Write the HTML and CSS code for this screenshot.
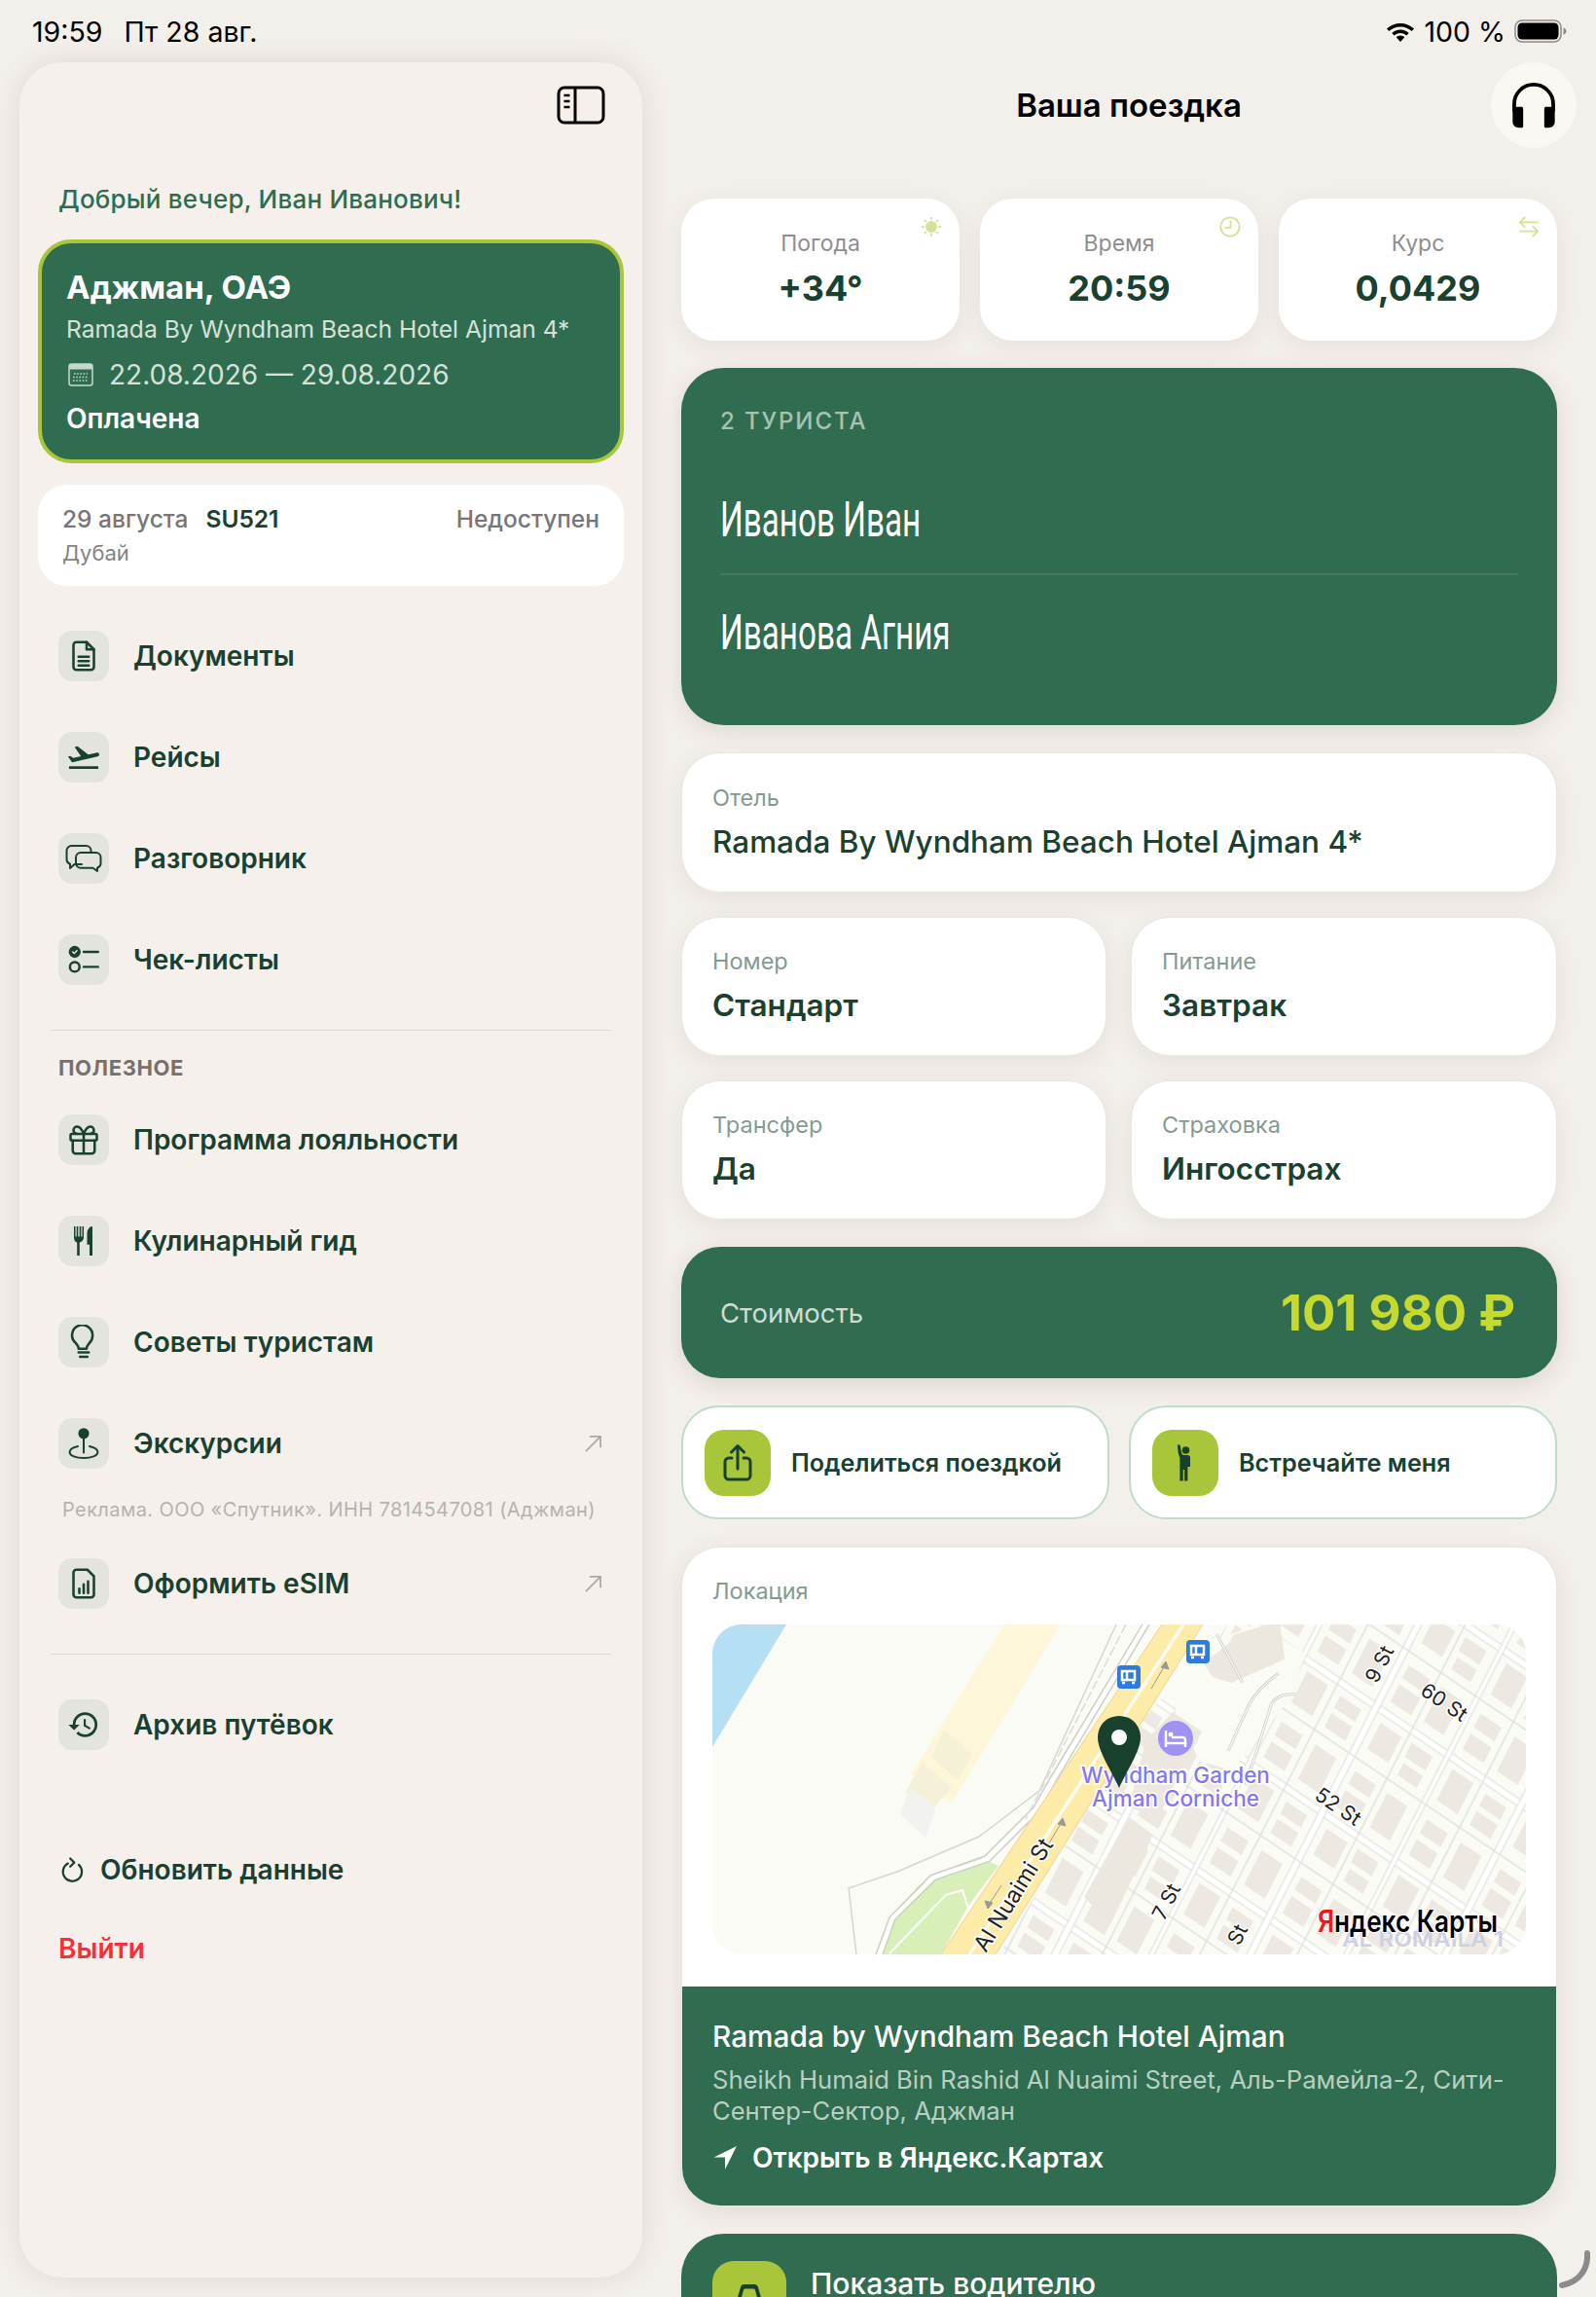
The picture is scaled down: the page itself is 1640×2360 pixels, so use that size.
FILE: index.html
```html
<!DOCTYPE html>
<html lang="ru">
<head>
  <meta charset="utf-8">
  <title>Ваша поездка</title>
  <link rel="stylesheet" href="styles.css">
</head>
<body>
  <div class="status-bar">
    <div class="status-left"><span>19:59</span><span>Пт 28 авг.</span></div>
    <div class="status-right">
      <svg class="wifi" viewBox="0 0 30 22"><path d="M15 3C9.600 3 4.800 5 1 8.600l2.300 2.500C6.300 8.200 10.400 6.500 15 6.500s8.700 1.700 11.700 4.600L29 8.600C25.200 5 20.400 3 15 3z"/><path d="M15 9.500c-3.400 0-6.400 1.300-8.700 3.500l2.400 2.500c1.600-1.600 3.800-2.500 6.300-2.500s4.700.900 6.300 2.500l2.400-2.500c-2.300-2.200-5.300-3.500-8.700-3.500z"/><path d="M15 15.500c-1.700 0-3.200.700-4.300 1.800L15 22l4.300-4.700c-1.100-1.100-2.600-1.800-4.300-1.800z"/></svg>
      <span>100 %</span>
      <svg class="battery" viewBox="0 0 54 24"><rect x="1" y="1" width="47" height="22" rx="7" fill="none" stroke="#8a8a8a" stroke-width="1.500"/><rect x="3.500" y="3.500" width="42" height="17" rx="4.500" fill="#000"/><path d="M50.500 8.500c2 .500 3 2 3 3.500s-1 3-3 3.500z" fill="#8a8a8a"/></svg>
    </div>
  </div>

  <div class="columns">
    <aside class="sidebar">
      <div class="side-top">
        <svg class="side-toggle" viewBox="0 0 50 40" fill="none" stroke="#000" stroke-width="3"><rect x="2" y="2" width="46" height="36" rx="6"/><path d="M19 2v36"/><path d="M7.500 10h6M7.500 16h6M7.500 22h6" stroke-width="2.500"/></svg>
      </div>
      <div class="greeting">Добрый вечер, Иван Иванович!</div>

      <div class="trip-card">
        <div class="trip-title">Аджман, ОАЭ</div>
        <div class="trip-hotel">Ramada By Wyndham Beach Hotel Ajman 4*</div>
        <div class="trip-dates">
          <svg viewBox="0 0 26 24" fill="none"><rect x="1" y="1" width="24" height="22" rx="2.500" stroke="#c5d8cd" stroke-width="1.500"/><path d="M1 6.500h24V3.500a2.500 2.500 0 0 0-2.500-2.500h-19A2.500 2.500 0 0 0 1 3.500z" fill="#c5d8cd"/><path d="M6 11h14M5 14.500h16M5 18h16" stroke="#c5d8cd" stroke-width="1.600" stroke-dasharray="1.600 1.600"/></svg>
          <span>22.08.2026 — 29.08.2026</span>
        </div>
        <div class="trip-status">Оплачена</div>
      </div>

      <div class="flight-card">
        <div class="flight-row">
          <span class="flight-date">29 августа</span>
          <span class="flight-num">SU521</span>
          <span class="flight-state">Недоступен</span>
        </div>
        <div class="flight-city">Дубай</div>
      </div>

      <nav class="nav nav-first">
        <a class="nav-item"><span class="nav-icon"><svg viewBox="0 0 24 24"><path d="M14 2.500H7a2 2 0 0 0-2 2v15a2 2 0 0 0 2 2h10a2 2 0 0 0 2-2V7.500z"/><path d="M14 2.500v5h5M8.500 12.500h7M8.500 15.500h7M8.500 18.500h7"/></svg></span>Документы</a>
        <a class="nav-item"><span class="nav-icon"><svg class="solid plane" viewBox="0 0 24 24" preserveAspectRatio="none"><path d="M2.500 19h19v2h-19v-2zm19.570-9.360c-.210-.800-1.040-1.280-1.840-1.060L14.920 10l-6.900-6.430-1.930.510 4.140 7.170-4.970 1.330-1.970-1.540-1.450.390 1.820 3.160.770 1.330 1.600-.430 5.310-1.420 4.350-1.160L21 11.490c.810-.230 1.280-1.050 1.070-1.850z"/></svg></span>Рейсы</a>
        <a class="nav-item"><span class="nav-icon"><svg class="wide" viewBox="0 0 38 30"><path d="M17 21H9.500L5 25v-4.200C3 20 1.500 18.500 1.500 16V7A5 5 0 0 1 6.500 2h15a5 5 0 0 1 5 5v2"/><path d="M16 9h15.500a5 5 0 0 1 5 5v6a5 5 0 0 1-3.500 4.700V28l-4.500-3.300H16a5 5 0 0 1-5-5V14a5 5 0 0 1 5-5z"/></svg></span>Разговорник</a>
        <a class="nav-item"><span class="nav-icon"><svg class="check" viewBox="0 0 26 26"><circle cx="5.500" cy="6.500" r="4" fill="currentColor"/><path d="M3.800 6.500l1.300 1.300 2.200-2.400" stroke="#e4e4df" stroke-width="1.200"/><circle cx="5.500" cy="19" r="4"/><path d="M13 6.500h12M13 19h12"/></svg></span>Чек-листы</a>
      </nav>

      <div class="side-divider"></div>
      <div class="side-label">ПОЛЕЗНОЕ</div>

      <nav class="nav nav-useful">
        <a class="nav-item"><span class="nav-icon"><svg viewBox="0 0 24 24"><rect x="3" y="8" width="18" height="4.500" rx="1"/><path d="M12 8v13.500M19.500 12.500V19.500a2 2 0 0 1-2 2h-11a2 2 0 0 1-2-2v-7"/><path d="M7.500 8a2.500 2.500 0 0 1 0-5C10 3 12 8 12 8s2-5 4.500-5a2.500 2.500 0 0 1 0 5"/></svg></span>Программа лояльности</a>
        <a class="nav-item"><span class="nav-icon"><svg class="solid fork" viewBox="0 0 24 24" preserveAspectRatio="none"><path d="M10.500 9H9.300V2H7.700v7H6.300V2H4.700v7H3.500V2H2v7.500c0 1.900 1.400 3.400 3.200 3.500v9h2.600v-9C9.600 12.900 12 11.400 12 9.500V2h-1.500zM15.500 7v7.500H18V22h3V2c-3 0-5.500 2.200-5.500 5z"/></svg></span>Кулинарный гид</a>
        <a class="nav-item"><span class="nav-icon"><svg viewBox="0 0 24 24"><path d="M9.500 16.500c0-1.700-.800-2.700-1.800-3.800A7 7 0 1 1 19 8c0 1.800-.800 3.500-2.200 4.700-1 1.100-1.800 2.100-1.800 3.800z" transform="translate(-1 0)"/><path d="M8.500 19h7M9.500 22h5"/></svg></span>Советы туристам</a>
        <a class="nav-item"><span class="nav-icon"><svg viewBox="0 0 30 30"><circle cx="15" cy="6.500" r="3.800" fill="currentColor"/><path d="M15 10v13"/><path d="M10 17.500c-4.500 1-7 2.700-7 5 0 3 5.400 5 12 5s12-2 12-5c0-2.300-2.500-4-7-5"/></svg></span>Экскурсии<svg class="ext-arrow" viewBox="0 0 20 20"><path d="M2 18L18 2M6 2h12v12"/></svg></a>
      </nav>
      <div class="ad-note">Реклама. ООО «Спутник». ИНН 7814547081 (Аджман)</div>
      <nav class="nav nav-esim">
        <a class="nav-item"><span class="nav-icon"><svg viewBox="0 0 24 24"><path d="M14.500 2.500H7a2 2 0 0 0-2 2v15a2 2 0 0 0 2 2h10a2 2 0 0 0 2-2V7z"/><path d="M9 18.500v-3M12 18.500v-6M15 18.500v-8"/></svg></span>Оформить eSIM<svg class="ext-arrow" viewBox="0 0 20 20"><path d="M2 18L18 2M6 2h12v12"/></svg></a>
      </nav>

      <div class="side-divider"></div>
      <nav class="nav nav-archive">
        <a class="nav-item"><span class="nav-icon"><svg class="solid big" viewBox="0 0 24 24"><path d="M13 3a9 9 0 0 0-9 9H1l3.890 3.890.070.140L9 12H6c0-3.870 3.130-7 7-7s7 3.130 7 7-3.130 7-7 7c-1.930 0-3.680-.790-4.940-2.060l-1.420 1.420A8.954 8.954 0 0 0 13 21a9 9 0 0 0 0-18zm-1 5v5l4.280 2.540.720-1.210-3.500-2.080V8H12z"/></svg></span>Архив путёвок</a>
      </nav>

      <a class="refresh"><svg viewBox="0 0 26 28"><path d="M8.500 7a10.500 10.500 0 1 0 12 1.500"/><path d="M11 1.500L15.500 6 11 10.500"/></svg>Обновить данные</a>
      <a class="logout">Выйти</a>
    </aside>

    <main class="main">
      <header class="main-head">
        <h1>Ваша поездка</h1>
        <button class="support">
          <svg viewBox="0 0 48 48"><path d="M5.500 30V23a18.500 18.500 0 0 1 37 0v7" fill="none" stroke="#000" stroke-width="3.500"/><path d="M4 30c0-2.500 2-4.500 5-4.500h3.500a1.500 1.500 0 0 1 1.500 1.500v17a1.500 1.500 0 0 1-1.500 1.500H10c-3.500 0-6-2.500-6-5.500zM44 30c0-2.500-2-4.500-5-4.500h-3.500A1.500 1.500 0 0 0 34 27v17a1.500 1.500 0 0 0 1.500 1.500H38c3.500 0 6-2.500 6-5.500z"/></svg>
        </button>
      </header>

      <section class="stats">
        <div class="stat">
          <svg class="stat-icon" viewBox="0 0 24 24"><circle cx="12" cy="12" r="5.500" fill="#d3e294"/><path d="M12 1v3M12 20v3M1 12h3M20 12h3M4.200 4.200l2.100 2.100M17.700 17.700l2.100 2.100M4.200 19.800l2.100-2.100M17.700 6.300l2.100-2.100"/></svg>
          <div class="stat-label">Погода</div>
          <div class="stat-value">+34°</div>
        </div>
        <div class="stat">
          <svg class="stat-icon" viewBox="0 0 24 24"><circle cx="12" cy="12" r="10.500"/><path d="M12.500 5v8H6"/></svg>
          <div class="stat-label">Время</div>
          <div class="stat-value">20:59</div>
        </div>
        <div class="stat">
          <svg class="stat-icon" viewBox="0 0 24 24"><path d="M23 7H2M8 1L2 7l6 6M1 17h21M16 11l6 6-6 6"/></svg>
          <div class="stat-label">Курс</div>
          <div class="stat-value">0,0429</div>
        </div>
      </section>

      <section class="tourists">
        <div class="tourists-count">2 ТУРИСТА</div>
        <div class="tourist tourist-first"><span>Иванов Иван</span></div>
        <div class="tourist"><span>Иванова Агния</span></div>
      </section>

      <section class="details">
        <div class="detail detail-wide">
          <div class="detail-label">Отель</div>
          <div class="detail-value">Ramada By Wyndham Beach Hotel Ajman 4*</div>
        </div>
        <div class="detail-row">
          <div class="detail"><div class="detail-label">Номер</div><div class="detail-value">Стандарт</div></div>
          <div class="detail"><div class="detail-label">Питание</div><div class="detail-value">Завтрак</div></div>
        </div>
        <div class="detail-row">
          <div class="detail"><div class="detail-label">Трансфер</div><div class="detail-value">Да</div></div>
          <div class="detail"><div class="detail-label">Страховка</div><div class="detail-value">Ингосстрах</div></div>
        </div>
      </section>

      <section class="cost">
        <span class="cost-label">Стоимость</span>
        <span class="cost-value">101 980 ₽</span>
      </section>

      <section class="actions">
        <button class="action">
          <span class="action-icon"><svg viewBox="0 0 32 40"><path d="M10 15H7a4 4 0 0 0-4 4v14a4 4 0 0 0 4 4h18a4 4 0 0 0 4-4V19a4 4 0 0 0-4-4h-3"/><path d="M16 26V3M9.500 9L16 2.500 22.500 9"/></svg></span>
          Поделиться поездкой
        </button>
        <button class="action">
          <span class="action-icon"><svg class="solid" viewBox="0 0 32 40"><circle cx="16.500" cy="7" r="3.800"/><path d="M8 1.500h2.600l1.600 8.500c.300 1.300 1.200 2 2.500 2h3.600c1.600 0 2.700 1.100 2.700 2.700V24h-2.600v14.500h-3.300V27h-1.400v11.500h-3.300V14.800L9.500 12.500C8.700 10 8 5 8 1.500z"/></svg></span>
          Встречайте меня
        </button>
      </section>

      <section class="location">
        <div class="location-top">
          <div class="detail-label">Локация</div>
          <div class="map">
            <svg viewBox="0 0 836 339" width="836" height="339">
              <defs>
                <pattern id="blocks" width="180" height="122" patternUnits="userSpaceOnUse" patternTransform="matrix(.829 .559 -.454 .891 476 86)">
                  <rect width="180" height="122" fill="#fbfbf6"/>
                  <g fill="#ede9e2">
                    <rect x="16" y="16" width="26" height="30"/><rect x="54" y="15" width="26" height="16"/><rect x="56" y="37" width="24" height="14"/>
                    <rect x="15" y="72" width="26" height="15"/><rect x="15" y="94" width="26" height="20"/><rect x="55" y="72" width="25" height="40"/>
                    <rect x="104" y="14" width="26" height="36"/><rect x="146" y="16" width="26" height="14"/><rect x="146" y="36" width="26" height="16"/>
                    <rect x="104" y="72" width="26" height="16"/><rect x="104" y="95" width="26" height="18"/><rect x="146" y="72" width="26" height="40"/>
                  </g>
                  <g fill="#fff" stroke="#dcdcd7" stroke-width="1">
                    <rect x="-2" y="1" width="184" height="7"/><rect x="1" y="-2" width="7" height="126"/><rect x="91" y="-2" width="5" height="126"/>
                  </g>
                  <g stroke="#e2e2dd" stroke-width="1.500">
                    <path d="M0 60H180M48 0V122M138 0V122"/>
                  </g>
                </pattern>
              </defs>
              <rect width="836" height="339" fill="#fbfbf6"/>
              <path d="M0 0H76L0 126Z" fill="#b5dff5"/>
              <path d="M300 0H358L246 184L204 154Z" fill="#fdf6d8"/>
              <path d="M238 108l29 25-15 27-27-24zM216 142l30 26-22 24-26-20z" fill="#f5f0d8"/>
              <path d="M203 167l27 22-11 30-26-24z" fill="#f2f2f0"/>
              <path d="M530 0H836V339H295L440 100Z" fill="url(#blocks)"/>
              <path d="M455 40L560 0L610 30L590 80L535 150L500 140Z" fill="#fbfbf6"/>
              <path d="M445 120l28-30 30 20-45 88-30-10z" fill="#ece7df"/>
              <path d="M505 40l27-22 3-7 48-15 5 40-55 24-19-6z" fill="#ece7df"/>
              <path d="M382 280l46-82 25 18-44 92z" fill="#ece7df"/>
              <path d="M294 248L263 289L235 339H170L182 304L212 268L274 239Z" fill="#d8f0b8"/>
              <g fill="none">
                <path d="M148 339L140 271L190 254L274 218L336 171L415 0" stroke="#d6d6d1" stroke-width="1.500"/>
                <path d="M168 339L182 301L224 258L280 238L330 188L347 158L442 0" stroke="#cfcfca" stroke-width="1.500"/>
                <path d="M175 339L188 303L230 262L285 243L336 192L353 161L449 0" stroke="#cfcfca" stroke-width="1.500"/>
                <path d="M172 339L185 302L227 260L283 241L333 190L350 160L445 0" stroke="#fff" stroke-width="4"/>
                <path d="M425 0L322 200" stroke="#dcdcd7" stroke-width="1.500" stroke-dasharray="10 3"/>
                <path d="M182 338L240 278L257 273L266 301L240 339" stroke="#fff" stroke-width="2"/>
                <path d="M518 10L545 60M582 50Q555 70 548 90L530 130M600 72Q575 70 572 90L548 165" stroke="#d5d5d0" stroke-width="3"/>
                <path d="M518 10L545 60M582 50Q555 70 548 90L530 130M600 72Q575 70 572 90L548 165" stroke="#fff" stroke-width="1"/>
              </g>
              <path d="M462 0H504L291 339H235Z" fill="#fdeca8"/>
              <path d="M462 0L235 339M504 0L291 339" stroke="#f8d6a0" stroke-width="1.200" fill="none"/>
              <path d="M484 0L264 339" stroke="#fffdf2" stroke-width="3.500" fill="none"/>
              <path d="M466 38L469 46L461 44ZM465 42L451 66" fill="#999" stroke="#999" stroke-width="1"/>
              <path d="M360 199L363 207L355 205ZM359 203L344 228" fill="#999" stroke="#999" stroke-width="1"/>
              <path d="M283 292L280 284L288 286ZM284 288L297 268" fill="#999" stroke="#999" stroke-width="1"/>

              <g class="bus"><rect x="416" y="42" width="24" height="24" rx="4"/><rect x="487" y="16" width="24" height="24" rx="4"/><path d="M421 48h13v9h-13zM426 48v9M421 60h3M431 60h3M492 22h13v9h-13zM497 22v9M492 34h3M502 34h3"/></g>

              <circle cx="476" cy="117" r="18" fill="#a091f5"/>
              <path d="M466 109v17M466 122h20v4M486 122v-3q0-3-3-3h-11" fill="none" stroke="#fff" stroke-width="2.500"/>
              <circle cx="471" cy="113" r="2.500" fill="#fff"/>

              <text class="map-poi" x="476" y="163">Wyndham Garden</text>
              <text class="map-poi" x="476" y="187">Ajman Corniche</text>
              <path d="M418 94C403 94 396 106 396 116C396 130 410 150 418 168C426 150 440 130 440 116C440 106 433 94 418 94Z" fill="#17402d"/>
              <circle cx="418" cy="116" r="8" fill="#fff"/>

              <text class="map-street" transform="translate(692 44) rotate(-63)">9 St</text>
              <text class="map-street" transform="translate(748 86) rotate(34)">60 St</text>
              <text class="map-street" transform="translate(639 193) rotate(34)">52 St</text>
              <text class="map-street" transform="translate(473 288) rotate(-63)">7 St</text>
              <text class="map-street" transform="translate(546 322) rotate(-63)">St</text>
              <text class="map-street map-road" transform="translate(316 282) rotate(-58)">Al Nuaimi St</text>

              <text class="map-area" x="647" y="331" textLength="166" lengthAdjust="spacingAndGlyphs">AL ROMAILA 1</text>
              <text class="map-logo" x="622" y="316" textLength="185" lengthAdjust="spacingAndGlyphs"><tspan fill="#f01818">Я</tspan>ндекс Карты</text>
            </svg>
          </div>
        </div>
        <div class="location-info">
          <div class="location-name">Ramada by Wyndham Beach Hotel Ajman</div>
          <div class="location-addr">Sheikh Humaid Bin Rashid Al Nuaimi Street, Аль-Рамейла-2, Сити-Сентер-Сектор, Аджман</div>
          <a class="location-link"><svg viewBox="0 0 24 24"><path d="M23 1L1.500 11.500H12V23z"/></svg>Открыть в Яндекс.Картах</a>
        </div>
      </section>

      <section class="driver">
        <span class="driver-icon"><svg viewBox="0 0 48 48"><path d="M6 46V30l5-3 4-14c.500-2 2-3 4-3h10c2 0 3.500 1 4 3l4 14 5 3v16z" fill="#17402d"/><path d="M15 27l3-11c.300-1 1-1.500 2-1.500h8c1 0 1.700.500 2 1.500l3 11z" fill="#a9c63a"/></svg></span>
        <span class="driver-text">Показать водителю</span>
      </section>
    </main>
  </div>

  <svg class="corner-mark" viewBox="0 0 32 40"><path d="M29 3c1 14-6 29-26 33" fill="none" stroke="#8b8b8b" stroke-width="6" stroke-linecap="round"/></svg>
</body>
</html>
```

FILE: styles.css
```css
* {
  box-sizing: border-box;
}

html, body {
  margin: 0;
  padding: 0;
}

body {
  position: relative;
  width: 1640px;
  height: 2360px;
  overflow: hidden;
  background-color: #f3efeb;
  font-family: Inter, "Noto Sans", sans-serif;
  color: #1a4030;
}

/* status bar */
.status-bar {
  display: flex;
  justify-content: space-between;
  align-items: center;
  height: 64px;
  padding: 0 30px 0 33px;
  font-size: 28.500px;
  color: #000;
}

.status-left {
  display: flex;
  gap: 22px;
}

.status-right {
  display: flex;
  align-items: center;
  gap: 9px;
}

.wifi {
  width: 30px;
  height: 22px;
}

.battery {
  width: 54px;
  height: 24px;
}

.columns {
  display: flex;
  padding-left: 20px;
}

/* left column */
.sidebar {
  display: flex;
  flex-direction: column;
  flex: none;
  width: 640px;
  height: 2276px;
  padding: 24px 19px 0;
  background-color: #f5f0ec;
  border-radius: 44px;
  box-shadow: 0 0 28px rgba(90, 80, 60, 0.13);
}

.side-top {
  display: flex;
  justify-content: flex-end;
  padding-right: 19px;
}

.side-toggle {
  width: 50px;
  height: 40px;
}

.greeting {
  margin: 62px 0 0 21px;
  font-size: 26px;
  line-height: 30px;
  font-weight: 500;
  letter-spacing: 0.2px;
  color: #306c50;
}

.trip-card {
  margin-top: 26px;
  height: 230px;
  padding: 26px 25px 0;
  background-color: #306c50;
  border: 4px solid #a9c63a;
  border-radius: 34px;
  color: #fff;
}

.trip-title {
  font-size: 33px;
  line-height: 38px;
  font-weight: 700;
}

.trip-hotel {
  margin-top: 7px;
  font-size: 24.600px;
  line-height: 34px;
  color: #d5e2da;
}

.trip-dates {
  display: flex;
  align-items: center;
  gap: 16px;
  margin-top: 11px;
  font-size: 28px;
  line-height: 38px;
  color: #d5e2da;
}

.trip-dates svg {
  width: 26px;
  height: 24px;
  margin-left: 2px;
}

.trip-status {
  margin-top: 9px;
  font-size: 28px;
  line-height: 34px;
  font-weight: 600;
}

.flight-card {
  height: 104px;
  margin-top: 22px;
  padding: 19px 25px 0;
  background-color: #fff;
  border-radius: 30px;
}

.flight-row {
  display: flex;
  gap: 18px;
  font-size: 24.500px;
  line-height: 32px;
  font-weight: 500;
  color: #77757a;
}

.flight-num {
  font-weight: 600;
  color: #1a4030;
}

.flight-state {
  margin-left: auto;
}

.flight-city {
  margin-top: 4px;
  font-size: 22px;
  line-height: 30px;
  color: #85837f;
}

.nav {
  display: flex;
  flex-direction: column;
  gap: 52px;
  padding-left: 21px;
}

.nav-first {
  margin-top: 46px;
}

.nav-useful {
  margin-top: 35px;
}

.nav-esim {
  margin-top: 38px;
}

.nav-archive {
  margin-top: 46px;
}

.nav-item {
  display: flex;
  align-items: center;
  gap: 25px;
  height: 52px;
  padding-right: 22px;
  font-size: 28px;
  font-weight: 600;
  color: #1a4030;
}

.nav-icon {
  display: flex;
  flex: none;
  align-items: center;
  justify-content: center;
  width: 52px;
  height: 52px;
  background-color: #e4e4df;
  border-radius: 14px;
}

.nav-icon svg {
  width: 36px;
  height: 36px;
  fill: none;
  stroke: currentColor;
  stroke-width: 1.700;
  stroke-linecap: round;
  stroke-linejoin: round;
}

.nav-icon svg.solid {
  fill: currentColor;
  stroke: none;
}

.nav-icon svg.wide {
  width: 38px;
  height: 30px;
  stroke-width: 2;
}

.nav-icon svg.check {
  width: 32px;
  height: 32px;
  stroke-width: 2;
}

.nav-icon svg.plane {
  width: 38px;
  height: 32px;
}

.nav-icon svg.fork {
  width: 24px;
  height: 36px;
}

.nav-icon svg.big {
  width: 34px;
  height: 34px;
}

.ext-arrow {
  width: 19px;
  height: 19px;
  margin-left: auto;
  fill: none;
  stroke: #a9a8a5;
  stroke-width: 1.800;
}

.side-divider {
  height: 1px;
  margin: 46px 13px 0;
  background-color: #dcdad6;
}

.side-label {
  margin: 25px 0 0 21px;
  font-size: 22px;
  line-height: 26px;
  font-weight: 700;
  letter-spacing: 0.6px;
  color: #77706c;
}

.ad-note {
  margin: 30px 0 0 25px;
  font-size: 20px;
  line-height: 24px;
  letter-spacing: 0.4px;
  color: #b5b3af;
}

.refresh {
  display: flex;
  align-items: center;
  gap: 17px;
  margin: 106px 0 0 23px;
  font-size: 28px;
  line-height: 34px;
  font-weight: 600;
}

.refresh svg {
  width: 24px;
  height: 28px;
  fill: none;
  stroke: currentColor;
  stroke-width: 2.400;
  stroke-linecap: round;
  stroke-linejoin: round;
}

.logout {
  margin: 47px 0 0 21px;
  font-size: 28px;
  line-height: 34px;
  font-weight: 600;
  color: #f6303a;
}

/* right column */
.main {
  display: flex;
  flex-direction: column;
  flex: none;
  gap: 28px;
  width: 900px;
  margin-left: 40px;
}

.main-head {
  display: grid;
  grid-template-columns: 88px 1fr 88px;
  align-items: center;
  width: 920px;
  height: 88px;
  margin-bottom: 24px;
}

.main-head h1 {
  grid-column: 2;
  margin: 0;
  font-size: 33px;
  font-weight: 600;
  text-align: center;
  color: #000;
}

.support {
  display: flex;
  align-items: center;
  justify-content: center;
  width: 88px;
  height: 88px;
  padding: 0;
  background-color: #fbf8f3;
  border: none;
  border-radius: 50%;
}

.support svg {
  width: 52px;
  height: 52px;
}

.stats {
  display: grid;
  grid-template-columns: repeat(3, 1fr);
  gap: 21px;
}

.stat {
  position: relative;
  height: 146px;
  padding-top: 30px;
  text-align: center;
  background-color: #fff;
  border-radius: 34px;
  box-shadow: 0 6px 24px rgba(80, 60, 40, 0.08);
}

.stat-icon {
  position: absolute;
  top: 18px;
  right: 18px;
  width: 22px;
  height: 22px;
  fill: none;
  stroke: #d3e294;
  stroke-width: 2;
}

.stat-label {
  font-size: 23px;
  line-height: 32px;
  color: #8e8e8e;
}

.stat-value {
  margin-top: 8px;
  font-size: 36px;
  line-height: 44px;
  font-weight: 700;
  color: #1a4030;
}

.tourists {
  height: 367px;
  padding: 38px 40px 0;
  background-color: #306c50;
  border-radius: 44px;
  box-shadow: 0 6px 24px rgba(80, 60, 40, 0.12);
  color: #fff;
}

.tourists-count {
  font-size: 24px;
  line-height: 34px;
  font-weight: 500;
  letter-spacing: 1.900px;
  color: #a5c2b2;
}

.tourist {
  height: 89px;
  padding-top: 29px;
  font-family: Roboto, sans-serif;
  font-size: 50px;
  line-height: 60px;
}

.tourist span {
  display: inline-block;
  transform: scaleX(0.665);
  transform-origin: left center;
  white-space: nowrap;
}

.tourist-first {
  height: 141px;
  padding-top: 54px;
  border-bottom: 2px solid #44795f;
}

.details {
  display: flex;
  flex-direction: column;
  gap: 25px;
}

.detail-row {
  display: grid;
  grid-template-columns: 437px 438px;
  gap: 25px;
}

.detail {
  height: 143px;
  padding: 29px 31px 0;
  background-color: #fff;
  border: 1px solid #e9e7e3;
  border-radius: 40px;
  box-shadow: 0 6px 24px rgba(80, 60, 40, 0.08);
}

.detail-wide {
  height: 144px;
  padding-top: 30px;
}

.detail-label {
  font-size: 23.500px;
  line-height: 32px;
  color: #869a90;
}

.detail-value {
  margin-top: 8px;
  font-size: 31.500px;
  line-height: 42px;
  font-weight: 600;
  color: #1a4030;
}

.detail-wide .detail-value {
  font-weight: 500;
}

.cost {
  display: flex;
  align-items: center;
  justify-content: space-between;
  height: 135px;
  padding: 0 43px 0 40px;
  background-color: #306c50;
  border-radius: 40px;
  box-shadow: 0 6px 24px rgba(80, 60, 40, 0.14);
}

.cost-label {
  font-size: 27.500px;
  color: #cfdcd4;
}

.cost-value {
  font-size: 51px;
  font-weight: 700;
  color: #c5d92f;
}

.actions {
  display: grid;
  grid-template-columns: 440px 440px;
  gap: 20px;
}

.action {
  display: flex;
  align-items: center;
  gap: 21px;
  height: 117px;
  padding: 0 0 0 22px;
  font-family: inherit;
  font-size: 25.200px;
  font-weight: 600;
  color: #1a4030;
  background-color: #fff;
  border: 2px solid #bfdccb;
  border-radius: 38px;
}

.action-icon {
  display: flex;
  align-items: center;
  justify-content: center;
  width: 68px;
  height: 68px;
  background-color: #a9c63a;
  border-radius: 20px;
}

.action-icon svg {
  width: 32px;
  height: 40px;
  fill: none;
  stroke: #17402d;
  stroke-width: 3;
  stroke-linecap: round;
  stroke-linejoin: round;
}

.action-icon svg.solid {
  fill: #17402d;
  stroke: none;
}

.location {
  overflow: hidden;
  background-color: #fff;
  border: 1px solid #e9e7e3;
  border-radius: 40px;
  box-shadow: 0 6px 24px rgba(80, 60, 40, 0.1);
}

.location-top {
  height: 451px;
  padding: 29px 31px 0;
}

.map {
  width: 836px;
  height: 339px;
  margin-top: 18px;
  overflow: hidden;
  border-radius: 30px;
}

.map svg {
  display: block;
}

.bus rect {
  fill: #2e7be0;
}

.bus path {
  fill: none;
  stroke: #fff;
  stroke-width: 2.500;
}

.map-poi {
  font-size: 22.500px;
  font-weight: 500;
  text-anchor: middle;
  fill: #8577ee;
  stroke: #fff;
  stroke-width: 3px;
  paint-order: stroke;
}

.map-street {
  font-size: 21px;
  text-anchor: middle;
  fill: #222;
  stroke: #fff;
  stroke-width: 3px;
  paint-order: stroke;
}

.map-road {
  font-size: 23px;
}

.map-area {
  font-size: 22px;
  font-weight: 600;
  fill: #cfcfe2;
}

.map-logo {
  font-size: 31px;
  font-weight: 600;
  fill: #000;
  stroke: #fff;
  stroke-width: 2px;
  paint-order: stroke;
}

.location-info {
  height: 225px;
  padding: 31px 31px 0;
  background-color: #306c50;
  color: #fff;
}

.location-name {
  font-size: 29.800px;
  line-height: 40px;
  font-weight: 500;
}

.location-addr {
  margin-top: 9px;
  font-size: 25.600px;
  line-height: 32px;
  color: #b8cfc2;
}

.location-link {
  display: flex;
  align-items: center;
  gap: 15px;
  margin-top: 12px;
  font-size: 28px;
  line-height: 40px;
  font-weight: 600;
}

.location-link svg {
  width: 26px;
  height: 26px;
  fill: #fff;
}

.driver {
  display: flex;
  gap: 25px;
  height: 130px;
  padding: 28px 32px 0;
  background-color: #306c50;
  border-radius: 44px;
  color: #fff;
}

.driver-icon {
  display: block;
  width: 76px;
  height: 76px;
  padding: 14px;
  background-color: #a9c63a;
  border-radius: 22px;
}

.driver-text {
  font-size: 30px;
  line-height: 46px;
  font-weight: 500;
}

.corner-mark {
  position: absolute;
  right: 6px;
  bottom: 8px;
  width: 32px;
  height: 40px;
}
```
